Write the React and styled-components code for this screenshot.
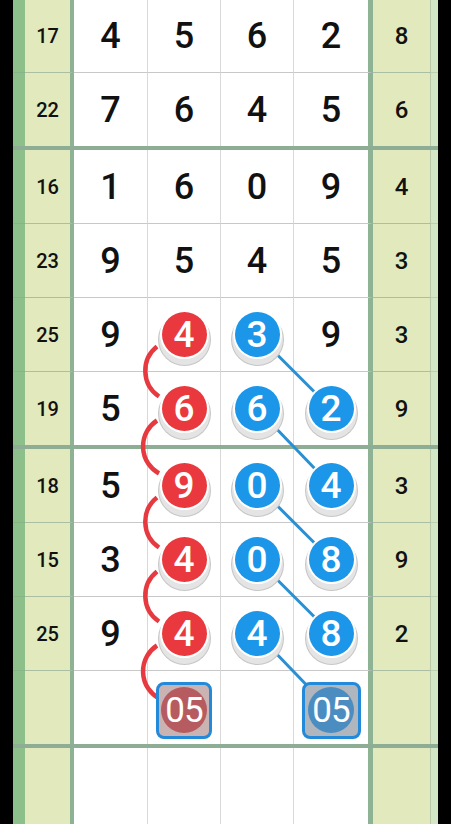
import React from 'react';
import styled, { createGlobalStyle } from 'styled-components';

const ROW_H = 73;
const THIN = 1;
const THICK = 4;
const GROUPS = [2, 4, 4, 1];
// x centres (board coordinates) of the white digit columns
const COL_X = [98, 171, 244, 318];

const GlobalStyle = createGlobalStyle`
  html, body { margin: 0; padding: 0; background: #000; }
  body { font-family: Roboto, "Noto Sans", "DejaVu Sans", sans-serif; }
`;

const Page = styled.div`
  width: 451px;
  height: 824px;
  overflow: hidden;
  background: #000;
  display: flex;
  padding: 0 13px;
  box-sizing: border-box;
`;

const Board = styled.div`
  position: relative;
  flex: none;
  width: 425px;
  margin-top: -1px;
  display: flex;
  flex-direction: column;
`;

const Row = styled.div`
  display: grid;
  grid-template-columns: 12px 49px 74px 73px 73px 79px 58px 7px;
  height: ${(p) => (p.$line ? ROW_H + THIN : ROW_H)}px;
  flex: ${(p) => (p.$fill ? '1 0 auto' : 'none')};
`;

const Separator = styled.div`
  flex: none;
  height: ${THICK}px;
  background: #8dae95;
`;

const StripL = styled.div`
  background: #8dbf8b;
  border-bottom: ${(p) => (p.$line ? '1px solid #86b585' : 'none')};
`;

const StripR = styled.div`
  background: #d3e6c6;
  border-bottom: ${(p) => (p.$line ? '1px solid #bdd0b0' : 'none')};
`;

const SideNum = styled.div`
  box-sizing: border-box;
  background: #e1e9bd;
  display: flex;
  align-items: center;
  justify-content: center;
  color: #111;
  font-weight: 500;
  font-size: ${(p) => (p.$right ? 24 : 20)}px;
  line-height: 1;
  border-right: ${(p) => (p.$right ? '1px solid #b7c9a8' : '4px solid #8db394')};
  border-bottom: ${(p) => (p.$line ? '1px solid #a9bea2' : 'none')};
`;

const Cell = styled.div`
  box-sizing: border-box;
  background: #fff;
  display: flex;
  align-items: center;
  justify-content: center;
  color: #111;
  font-size: 36px;
  font-weight: 500;
  line-height: 1;
  border-right: ${(p) => (p.$last ? '5px solid #8db394' : '1px solid #d9d9d9')};
  border-bottom: ${(p) => (p.$line ? '1px solid #c8c8c8' : 'none')};
`;

const Ball = styled.div`
  position: relative;
  z-index: 2;
  width: 45px;
  height: 45px;
  border-radius: 50%;
  background: ${(p) => (p.$tone === 'red' ? '#e9393e' : '#1b96e8')};
  color: #fff;
  font-size: 37px;
  font-weight: 500;
  line-height: 1;
  display: flex;
  align-items: center;
  justify-content: center;
  box-shadow: 0 0 0 2px #fff, 0 5px 0 3px #e4e4e4, 0 5px 0 4px #c6c6c6;
`;

const Pick = styled.div`
  position: relative;
  z-index: 2;
  box-sizing: border-box;
  width: ${(p) => (p.$tone === 'red' ? 56 : 59)}px;
  height: 57px;
  margin-top: 5px;
  border: 3px solid #2389d9;
  border-radius: 8px;
  background: ${(p) => (p.$tone === 'red' ? '#c9b3b3' : '#afb6bd')};
  display: flex;
  align-items: center;
  justify-content: center;
`;

const PickDisc = styled.div`
  width: 46px;
  height: 46px;
  border-radius: 50%;
  background: ${(p) => (p.$tone === 'red' ? '#b65c60' : '#4c8dc1')};
  color: #fff;
  font-size: 35px;
  font-weight: 400;
  letter-spacing: -1px;
  line-height: 1;
  display: flex;
  align-items: center;
  justify-content: center;
`;

const Links = styled.svg`
  position: absolute;
  left: 0;
  top: 0;
  z-index: 1;
  pointer-events: none;
  overflow: visible;
`;

const R = (v) => ({ t: 'red', v });
const B = (v) => ({ t: 'blue', v });
const P = (t) => ({ t, v: '05', pick: true });

const ROWS = [
  { l: '17', d: [4, 5, 6, 2], r: '8' },
  { l: '22', d: [7, 6, 4, 5], r: '6' },
  { l: '16', d: [1, 6, 0, 9], r: '4' },
  { l: '23', d: [9, 5, 4, 5], r: '3' },
  { l: '25', d: [9, R(4), B(3), 9], r: '3' },
  { l: '19', d: [5, R(6), B(6), B(2)], r: '9' },
  { l: '18', d: [5, R(9), B(0), B(4)], r: '3' },
  { l: '15', d: [3, R(4), B(0), B(8)], r: '9' },
  { l: '25', d: [9, R(4), B(4), B(8)], r: '2' },
  { l: '', d: ['', P('red'), '', P('blue')], r: '' },
  { l: '', d: ['', '', '', ''], r: '' },
];

// row centre y in board coordinates
function rowCentres() {
  const out = [];
  let y = 0;
  GROUPS.forEach((n) => {
    for (let i = 0; i < n; i++) {
      out.push(y + ROW_H / 2);
      y += ROW_H + (i < n - 1 ? THIN : 0);
    }
    y += THICK;
  });
  return out;
}

function Content({ item }) {
  if (item && typeof item === 'object') {
    if (item.pick) {
      return (
        <Pick $tone={item.t}>
          <PickDisc $tone={item.t}>{item.v}</PickDisc>
        </Pick>
      );
    }
    return <Ball $tone={item.t}>{item.v}</Ball>;
  }
  return item === '' ? null : String(item);
}

function LinkLayer() {
  const cy = rowCentres();
  const arcs = [];
  const lines = [];
  for (let r = 4; r <= 8; r++) {
    const x = COL_X[1];
    const y1 = cy[r];
    const y2 = cy[r + 1] + (r + 1 === 9 ? 3 : 0);
    arcs.push(`M ${x - 27} ${y1 + 12} A 31 31 0 0 0 ${x - 25} ${y2 - 12}`);
    lines.push([COL_X[2], cy[r], COL_X[3], y2]);
  }
  return (
    <Links width="425" height="830" viewBox="0 0 425 830">
      {arcs.map((d, i) => (
        <path key={'a' + i} d={d} fill="none" stroke="#e63a40" strokeWidth="4.5" />
      ))}
      {lines.map(([x1, y1, x2, y2], i) => (
        <line key={'l' + i} x1={x1} y1={y1} x2={x2} y2={y2} stroke="#2a8fd3" strokeWidth="3" />
      ))}
    </Links>
  );
}

export default function App() {
  let idx = 0;
  const blocks = [];
  GROUPS.forEach((n, g) => {
    const lastGroup = g === GROUPS.length - 1;
    for (let i = 0; i < n; i++) {
      const row = ROWS[idx];
      const line = i < n - 1;
      blocks.push(
        <Row key={'r' + idx} $line={line} $fill={lastGroup}>
          <StripL $line={line} />
          <SideNum $line={line}>{row.l}</SideNum>
          {row.d.map((it, c) => (
            <Cell key={c} $line={line} $last={c === 3}>
              <Content item={it} />
            </Cell>
          ))}
          <SideNum $line={line} $right>{row.r}</SideNum>
          <StripR $line={line} />
        </Row>
      );
      idx++;
    }
    if (!lastGroup) blocks.push(<Separator key={'s' + g} />);
  });
  return (
    <>
      <GlobalStyle />
      <Page>
        <Board>
          {blocks}
          <LinkLayer />
        </Board>
      </Page>
    </>
  );
}
